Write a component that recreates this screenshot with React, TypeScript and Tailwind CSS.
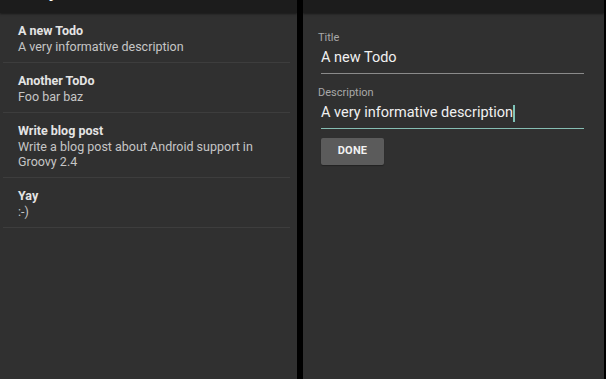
import React from "react";

const todos = [
  { title: "A new Todo", desc: "A very informative description" },
  { title: "Another ToDo", desc: "Foo bar baz" },
  { title: "Write blog post", desc: "Write a blog post about Android support in Groovy 2.4" },
  { title: "Yay", desc: ":-)" },
];

export default function App() {
  return (
    <div
      className="flex w-[606px] h-[379px] bg-black overflow-hidden"
      style={{ fontFamily: "Roboto, 'Noto Sans', sans-serif" }}
    >
      {/* Left pane */}
      <div className="w-[297px] h-full bg-[#303030] flex flex-col">
        <div className="h-[13px] bg-[#1c1c1c] shadow-[0_1px_2px_rgba(0,0,0,0.5)] relative overflow-hidden shrink-0">
          <span className="absolute left-[31px] top-[-22px] text-[20px] leading-[24px] text-white font-medium">
            My Todos
          </span>
        </div>
        <div className="flex flex-col">
          {todos.map((t) => (
            <div key={t.title} className="flex flex-col">
              <div className="pl-[18px] pr-[20px] pt-[10px] pb-[8px]">
                <div className="text-[12.5px] leading-[16px] font-bold text-[#e4e4e4]">{t.title}</div>
                <div className="text-[12.5px] leading-[15px] text-[#c6c6c6]">{t.desc}</div>
              </div>
              <div className="h-px ml-[3px] mr-[7px] bg-[#3d3d3d]" />
            </div>
          ))}
        </div>
      </div>

      <div className="w-[6px] h-full bg-black" />

      {/* Right pane */}
      <div className="w-[301px] h-full bg-[#303030] flex flex-col">
        <div className="h-[13px] bg-[#1c1c1c] shadow-[0_1px_2px_rgba(0,0,0,0.5)] shrink-0" />
        <div className="flex flex-col pl-[15px]">
          <div className="mt-[18px] text-[11px] leading-[14px] text-[#a8a8a8]">Title</div>
          <div className="ml-[3px] w-[263px] mt-[3px] pb-[5px] border-b border-[#8a8a8a]">
            <div className="text-[14.5px] leading-[20px] text-[#f0f0f0]">A new Todo</div>
          </div>
          <div className="mt-[12px] text-[11px] leading-[14px] text-[#a8a8a8]">Description</div>
          <div className="ml-[3px] w-[263px] mt-[3px] pb-[5px] border-b-[1.5px] border-[#86bdb3]">
            <div className="text-[14.5px] leading-[20px] text-[#f0f0f0] flex items-center">
              <span>A very informative description</span>
              <span className="inline-block w-[1.5px] h-[17px] bg-[#7fc4b8]" />
            </div>
          </div>
          <div className="ml-[3px] mt-[8px]">
            <button className="w-[63px] h-[27px] bg-[#5b5b5b] rounded-[2px] text-[11px] font-bold text-[#f2f2f2] tracking-[0.2px] shadow-[0_1px_1px_rgba(0,0,0,0.3)]">
              DONE
            </button>
          </div>
        </div>
      </div>

      <div className="flex-1 h-full bg-black" />
    </div>
  );
}
